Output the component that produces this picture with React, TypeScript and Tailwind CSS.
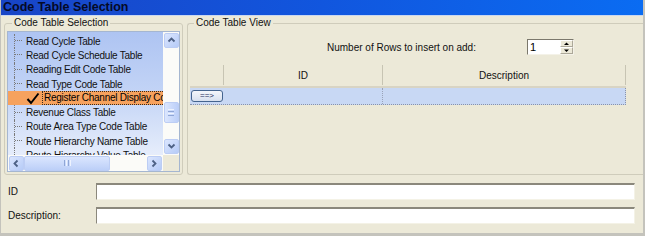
import React from "react";

const items = [
  "Read Cycle Table",
  "Read Cycle Schedule Table",
  "Reading Edit Code Table",
  "Read Type Code Table",
  "Register Channel Display Code Table",
  "Revenue Class Table",
  "Route Area Type Code Table",
  "Route Hierarchy Name Table",
  "Route Hierarchy Value Table",
];

const Chevron = ({ dir }: { dir: "up" | "down" | "left" | "right" }) => {
  const d = {
    up: "M1.5 5.5 L4.5 2.5 L7.5 5.5",
    down: "M1.5 2.5 L4.5 5.5 L7.5 2.5",
    left: "M5.5 1.5 L2.5 4.5 L5.5 7.5",
    right: "M2.5 1.5 L5.5 4.5 L2.5 7.5",
  }[dir];
  return (
    <svg width="9" height="9" viewBox="0 0 9 9">
      <path d={d} fill="none" stroke="#4d6185" strokeWidth="1.8" />
    </svg>
  );
};

const ScrollButton = ({ dir }: { dir: "up" | "down" | "left" | "right" }) => (
  <div className="w-[15px] h-[15px] rounded-[2px] border border-[#bccdf4] bg-gradient-to-br from-[#dbe6fe] to-[#b6cbf7] flex items-center justify-center">
    <Chevron dir={dir} />
  </div>
);

const CodeList = () => (
  <div className="h-[141px] border border-[#a5b6d0] grid grid-cols-[155px_16px] grid-rows-[123px_16px] bg-white">
    <div className="overflow-hidden pt-[2px] bg-gradient-to-b from-[#aec4f2] via-[#c3d4f6] to-[#e6edfb]">
      {items.map((name, i) =>
        i === 4 ? (
          <div key={name} className="h-[14.3px] flex items-center bg-[#f6a25e] whitespace-nowrap">
            <div className="w-[18px] shrink-0" />
            <svg width="14" height="13" viewBox="0 0 14 13" className="shrink-0">
              <path d="M1.5 7 L5 11 L12.5 1.5" fill="none" stroke="#000" strokeWidth="2" />
            </svg>
            <span className="ml-[2px] px-[1px] leading-[12px] border border-dotted border-[#3a2a1a] text-[10px] tracking-[-0.25px] text-black">
              {name}
            </span>
          </div>
        ) : (
          <div key={name} className="h-[14.3px] flex items-center whitespace-nowrap">
            <div className="w-[6px] shrink-0" />
            <div className="w-[9px] h-full shrink-0 border-l border-dotted border-[#7a7a7a]">
              <div className="h-1/2 w-[7px] border-b border-dotted border-[#7a7a7a]" />
            </div>
            <span className="ml-[3px] text-[10px] tracking-[-0.25px] text-[#111]">{name}</span>
          </div>
        )
      )}
    </div>
    <div className="flex flex-col items-center bg-[#fbfbf8] py-[1px]">
      <ScrollButton dir="up" />
      <div className="h-[54px]" />
      <div className="w-[15px] h-[21px] rounded-[2px] border border-[#bccdf4] bg-gradient-to-r from-[#dbe6fe] to-[#bccff8] flex flex-col items-center justify-center gap-[1px]">
        <div className="w-[6px] h-px bg-[#eef3fe]" />
        <div className="w-[6px] h-px bg-[#8fa6d6]" />
        <div className="w-[6px] h-px bg-[#eef3fe]" />
        <div className="w-[6px] h-px bg-[#8fa6d6]" />
      </div>
      <div className="flex-1" />
      <ScrollButton dir="down" />
    </div>
    <div className="flex items-center bg-[#fbfbf8] px-[1px]">
      <ScrollButton dir="left" />
      <div className="w-[86px] h-[15px] rounded-[2px] border border-[#bccdf4] bg-gradient-to-b from-[#dbe6fe] to-[#bccff8] flex items-center justify-center gap-[1px]">
        <div className="w-px h-[6px] bg-[#8fa6d6]" />
        <div className="w-px h-[6px] bg-[#eef3fe]" />
        <div className="w-px h-[6px] bg-[#8fa6d6]" />
        <div className="w-px h-[6px] bg-[#eef3fe]" />
      </div>
      <div className="flex-1" />
      <ScrollButton dir="right" />
    </div>
    <div className="bg-[#ece9d8]" />
  </div>
);

const SpinBox = () => (
  <div className="w-[47px] h-[16px] flex border border-t-[#7b786c] border-l-[#7b786c] border-b-[#f4f2e8] border-r-[#f4f2e8] bg-white">
    <div className="flex-1 pl-[2px] text-[11px] leading-[14px] text-black">1</div>
    <div className="w-[13px] flex flex-col">
      {["M1 4 L3.5 1.5 L6 4", "M1 1.5 L3.5 4 L6 1.5"].map((d) => (
        <div key={d} className="flex-1 flex items-center justify-center bg-[#ece9d8] border border-[#fff] border-b-[#aca899] border-r-[#aca899]">
          <svg width="7" height="5" viewBox="0 0 7 5">
            <path d={d} fill="#000" />
          </svg>
        </div>
      ))}
    </div>
  </div>
);

const Grid = () => (
  <div className="ml-[2px] mt-[9px] w-[436px] text-[10px] text-[#111]">
    <div className="h-[24px] flex border-b-[2px] border-[#d8d4c4] shadow-[0_1px_0_#e4e1d3]">
      <div className="w-[34px] flex items-center">
        <div className="ml-auto w-px h-[20px] bg-[#c7c4b3]" />
      </div>
      <div className="w-[159px] flex items-center">
        <div className="flex-1 text-center">ID</div>
        <div className="w-px h-[20px] bg-[#c7c4b3]" />
      </div>
      <div className="w-[243px] flex items-center">
        <div className="flex-1 text-center">Description</div>
        <div className="w-px h-[20px] bg-[#c7c4b3]" />
      </div>
    </div>
    <div className="h-[17px] flex bg-[#c8d8f4] border-b border-r border-dotted border-[#8a93a8]">
      <div className="w-[34px] flex items-center pl-[1px]">
        <div className="w-[32px] h-[12px] rounded-[3px] border border-[#44648f] bg-gradient-to-b from-[#f4f6fb] to-[#d7e0ef] flex items-center justify-center text-[8px] leading-none text-[#1b2a55]">
          ==&gt;
        </div>
      </div>
      <div className="w-[159px] border-r border-dotted border-[#9aa3b8]" />
      <div className="flex-1" />
    </div>
  </div>
);

const FieldRow = ({ label }: { label: string }) => (
  <div className="flex items-center h-[17px]">
    <div className="w-[88px] text-[10px] text-[#111]">{label}</div>
    <div className="w-[539px] h-[17px] bg-white border-t-2 border-l border-t-[#8b887c] border-l-[#8b887c] border-b border-r border-b-[#f4f2e6] border-r-[#f4f2e6]" />
  </div>
);

export default function App() {
  return (
    <div className="w-[645px] h-[236px] overflow-hidden bg-[#ece9d8] border-l border-r-2 border-b-[3px] border-[#c4c3bc] font-['Liberation_Sans',Arial,sans-serif] flex flex-col">
      <div className="h-[15px] shrink-0 bg-gradient-to-r from-[#1845c6] via-[#1156de] to-[#0a6cf2] flex items-center pl-[2px]">
        <span className="text-[12.5px] font-bold leading-none text-[#050a26]">Code Table Selection</span>
      </div>
      <div className="h-px shrink-0 bg-[#c9d7f0]" />
      <div className="h-[159px] shrink-0 flex pt-px">
        <fieldset className="ml-[3px] w-[179px] h-[158px] border border-[#cfccbb] rounded-[3px] px-[2px] pb-[1px]">
          <legend className="ml-[5px] px-[2px] text-[10px] leading-[12px] text-[#111]">Code Table Selection</legend>
          <div className="pt-[2px]">
            <CodeList />
          </div>
        </fieldset>
        <fieldset className="ml-[4px] flex-1 h-[158px] border border-r-0 border-[#cfccbb] rounded-l-[3px]">
          <legend className="ml-[6px] px-[2px] text-[10px] leading-[12px] text-[#111]">Code Table View</legend>
          <div className="mt-[10px] flex items-center">
            <div className="ml-[139px] w-[200px] text-[10px] text-[#111]">Number of Rows to insert on add:</div>
            <SpinBox />
          </div>
          <Grid />
        </fieldset>
      </div>
      <div className="flex flex-col gap-[7px] pl-[7px] pt-[8px]">
        <FieldRow label="ID" />
        <FieldRow label="Description:" />
      </div>
    </div>
  );
}
